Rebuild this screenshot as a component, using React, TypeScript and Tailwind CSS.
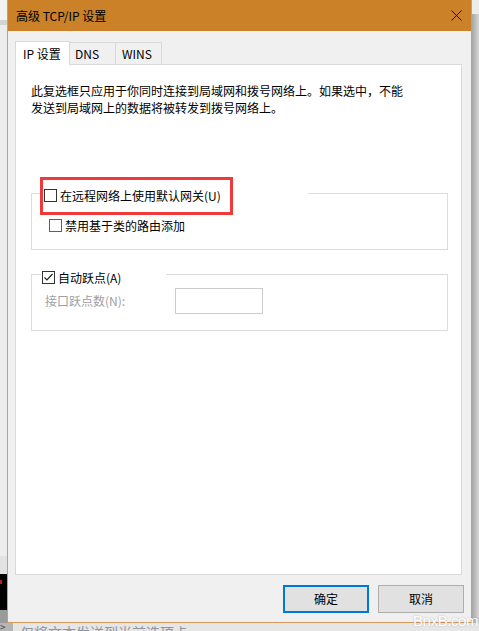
import React from "react";

function Box({ color = "#333333", checked = false }: { color?: string; checked?: boolean }) {
  return (
    <div className={`w-[13px] h-[13px] shrink-0 bg-white border relative`} style={{ borderColor: color }}>
      {checked && (
        <svg width="11" height="11" viewBox="0 0 11 11" className="absolute left-0 top-0">
          <path d="M1.5 5.5 L4 8 L9.5 2" fill="none" stroke="#222" strokeWidth="1.2" />
        </svg>
      )}
    </div>
  );
}

export default function App() {
  return (
    <div className="relative w-[479px] h-[631px] overflow-hidden bg-[#e4e4e4] font-['Noto_Sans_CJK_SC',sans-serif] text-[12px] text-black">
      <div className="flex h-[623px]">
        {/* left background strip */}
        <div className="w-[7px] flex flex-col">
          <div className="h-[20px] bg-[#f3f3f3]" />
          <div className="h-[5px] bg-[#d4d4d4]" />
          <div className="h-[531px] bg-[#ededed]" />
          <div className="h-[18px] bg-[#e2e2e2]" />
          <div className="h-[36px] bg-black flex flex-col pt-[6px]">
            <div className="w-[2px] h-[4px] bg-[#c02020]" />
          </div>
          <div className="flex-1 bg-[#9a9a9a]" />
        </div>

        {/* dialog */}
        <div className="w-[465px] flex flex-col border-x border-b border-[#d59a5c] bg-[#f0f0f0]">
          <div className="h-[31px] bg-[#ca8128] flex items-center justify-between pl-[8px] pr-[9px]">
            <span className="leading-[16px] pt-[1px]">高级 TCP/IP 设置</span>
            <svg width="11" height="11" viewBox="0 0 11 11">
              <path d="M0.5 0.5 L10.5 10.5 M10.5 0.5 L0.5 10.5" stroke="#111" strokeWidth="1" />
            </svg>
          </div>

          <div className="flex-1 flex flex-col pl-[7px] pr-[9px] pt-[10px]">
            {/* tabs */}
            <div className="flex items-end h-[23px]">
              <div className="w-[55px] h-[24px] -mb-px relative z-10 bg-white border border-b-0 border-[#d9d9d9] pl-[7px] flex items-center leading-[14px]">
                IP 设置
              </div>
              <div className="w-[46px] h-[22px] border-t border-r border-[#d9d9d9] pl-[5px] flex items-center leading-[14px]">
                DNS
              </div>
              <div className="w-[46px] h-[22px] border-t border-r border-[#d9d9d9] pl-[6px] flex items-center leading-[14px]">
                WINS
              </div>
            </div>

            {/* panel */}
            <div className="w-[447px] h-[511px] border border-[#d9d9d9] bg-white flex flex-col pt-[17px] pl-[15px]">
              <p className="leading-[17px]">
                此复选框只应用于你同时连接到局域网和拨号网络上。如果选中，不能
                <br />
                发送到局域网上的数据将被转发到拨号网络上。
              </p>

              {/* group 1 */}
              <div className="relative mt-[77px] w-[417px] h-[57px] border border-[#dcdcdc]">
                <div className="absolute left-[11px] top-[-5px] w-[265px] h-[13px] bg-white flex items-center pl-[1px] gap-[3px]">
                  <Box color="#333333" />
                  <span className="leading-[13px]">在远程网络上使用默认网关(U)</span>
                </div>
                <div className="flex items-center pt-[25px] pl-[17px] gap-[3px]">
                  <Box color="#0078d7" />
                  <span className="leading-[13px]">禁用基于类的路由添加</span>
                </div>
              </div>

              {/* group 2 */}
              <div className="relative mt-[24px] w-[417px] h-[57px] border border-[#dcdcdc]">
                <div className="absolute left-[9px] top-[-4px] w-[125px] h-[13px] bg-white flex items-center pl-[1px] gap-[3px]">
                  <Box color="#333333" checked />
                  <span className="leading-[13px]">自动跃点(A)</span>
                </div>
                <div className="flex items-center pt-[13px] pl-[13px]">
                  <span className="w-[130px] text-[#a0a0a0] leading-[14px]">接口跃点数(N):</span>
                  <div className="w-[88px] h-[26px] border border-[#cccccc] bg-white" />
                </div>
              </div>
            </div>

            {/* buttons */}
            <div className="flex justify-end gap-[9px] mt-[10px] -mr-[2px]">
              <button className="w-[86px] h-[28px] border-2 border-[#0078d7] bg-[#e1e1e1] leading-[14px]">确定</button>
              <button className="w-[86px] h-[28px] border border-[#adadad] bg-[#e1e1e1] leading-[14px]">取消</button>
            </div>
          </div>
        </div>

        {/* right shadow strip */}
        <div className="w-[7px] flex flex-col">
          <div className="h-[14px] bg-[#ececec]" />
          <div className="flex-1 bg-gradient-to-r from-[#a8a8a8] to-[#d6d6d6]" />
        </div>
      </div>

      {/* bottom strip */}
      <div className="h-[8px] flex overflow-hidden bg-[#e6e6e6]">
        <div className="w-[13px] bg-[#b5b5b5] text-[10px] leading-[8px] text-[#444] overflow-hidden">&gt;_</div>
        <div className="pl-[7px] text-[14px] leading-[18px] text-[#8a96a4]">仅将文本发送到当前选项卡</div>
      </div>

      {/* red highlight */}
      <div className="absolute left-[40px] top-[177px] w-[193px] h-[38px] border-[3px] border-[#f03a3a]" />

      {/* watermark */}
      <div className="absolute left-[413px] top-[612px] text-[15px] leading-[17px] tracking-[-0.4px] text-white font-['Liberation_Sans',sans-serif] [text-shadow:0_0_2px_rgba(0,0,0,0.25)]">
        BnxB.com
      </div>
    </div>
  );
}
